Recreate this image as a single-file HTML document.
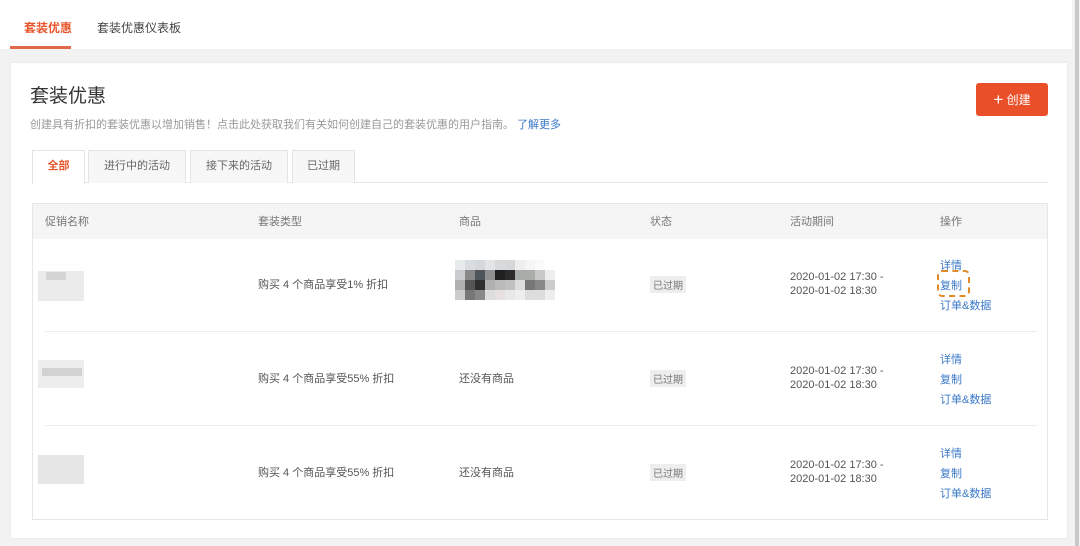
<!DOCTYPE html>
<html><head><meta charset="utf-8"><style>
*{margin:0;padding:0;box-sizing:border-box}
body{width:1080px;height:546px;background:#f2f2f2;font-family:"Liberation Sans","Noto Sans CJK SC",sans-serif;position:relative;overflow:hidden;color:#333}
.a{position:absolute;white-space:nowrap}
.top{position:absolute;left:0;top:0;width:1072px;height:49px;background:#fff}
.card{position:absolute;left:10px;top:62px;width:1058px;height:477px;background:#fff;border:1px solid #ececec}
.tab{position:absolute;top:150px;height:33px;border:1px solid #e4e4e4;border-bottom:none;background:#f7f7f7;font-size:11px;color:#666;text-align:center;line-height:31px}
.tbl{position:absolute;left:32px;top:203px;width:1016px;height:317px;border:1px solid #e6e6e6;background:#fff}
.hd{position:absolute;left:0;top:0;width:100%;height:35px;background:#f5f5f5}
.t{font-size:11px;color:#555}
.h{font-size:11px;color:#777}
.lk{font-size:11px;color:#3a78c8}
.tag{font-size:10px;color:#777;background:#eee;padding:1px 3px}
.ln{position:absolute;left:12px;width:992px;height:1px;background:#ececec}
.mos{position:absolute;left:455px;top:260px;display:grid;grid-template-columns:repeat(10,10px);grid-auto-rows:10px}
</style></head><body>
<div class="top"></div>
<div class="a" style="left:24px;top:19px;font-size:12px;font-weight:bold;color:#e8542a">套装优惠</div>
<div class="a" style="left:97px;top:19px;font-size:12px;color:#444">套装优惠仪表板</div>
<div class="a" style="left:10px;top:46px;width:61px;height:3px;background:#e0694a"></div>
<div class="a" style="left:1075px;top:0;width:4px;height:546px;background:#c8c8c8"></div>
<div class="card"></div>
<div class="a" style="left:30px;top:81px;font-size:19px;color:#333">套装优惠</div>
<div class="a" style="left:30px;top:116px;font-size:11px;color:#999">创建具有折扣的套装优惠以增加销售！点击此处获取我们有关如何创建自己的套装优惠的用户指南。 <span style="color:#3a78c8">了解更多</span></div>
<div class="a" style="left:976px;top:83px;width:72px;height:33px;background:#e9502a;border-radius:3px;color:#fff;font-size:12px;line-height:33px;text-align:center"><span style="font-size:17px;font-weight:300;vertical-align:-1px">+</span> 创建</div>
<div class="a" style="left:32px;top:182px;width:1016px;height:1px;background:#e6e6e6"></div>
<div class="tab" style="left:32px;width:53px;background:#fff;height:34px;color:#e8542a;font-weight:bold">全部</div>
<div class="tab" style="left:88px;width:98px">进行中的活动</div>
<div class="tab" style="left:190px;width:98px">接下来的活动</div>
<div class="tab" style="left:292px;width:63px">已过期</div>
<div class="tbl"><div class="hd"></div>
<div class="ln" style="top:127px"></div><div class="ln" style="top:221px"></div></div>
<div class="a h" style="left:45px;top:213px">促销名称</div>
<div class="a h" style="left:258px;top:213px">套装类型</div>
<div class="a h" style="left:459px;top:213px">商品</div>
<div class="a h" style="left:650px;top:213px">状态</div>
<div class="a h" style="left:790px;top:213px">活动期间</div>
<div class="a h" style="left:940px;top:213px">操作</div>

<div class="a" style="left:38px;top:271px;width:46px;height:30px;background:#ebebeb"></div>
<div class="a" style="left:46px;top:272px;width:20px;height:8px;background:#d4d4d4"></div>
<div class="a" style="left:38px;top:360px;width:46px;height:28px;background:#ededed"></div>
<div class="a" style="left:42px;top:368px;width:40px;height:8px;background:#d2d2d2"></div>
<div class="a" style="left:38px;top:455px;width:46px;height:29px;background:#e6e6e6"></div>

<div class="a t" style="left:258px;top:276px">购买 4 个商品享受1% 折扣</div>
<div class="a t" style="left:258px;top:370px">购买 4 个商品享受55% 折扣</div>
<div class="a t" style="left:258px;top:464px">购买 4 个商品享受55% 折扣</div>
<div class="mos">
<i style="background:#e8ebec"></i><i style="background:#dadde0"></i><i style="background:#d4d8db"></i><i style="background:#e2e4e5"></i><i style="background:#d8d9db"></i><i style="background:#d6d7d9"></i><i style="background:#eee"></i><i style="background:#f5f5f5"></i><i style="background:#fafafa"></i><i style="background:#fff"></i>
<i style="background:#c8cccd"></i><i style="background:#888"></i><i style="background:#4d555a"></i><i style="background:#909090"></i><i style="background:#1f1f1f"></i><i style="background:#2b2b2b"></i><i style="background:#a8aca8"></i><i style="background:#a9ada9"></i><i style="background:#c8c8c8"></i><i style="background:#eee"></i>
<i style="background:#b0b0b0"></i><i style="background:#555"></i><i style="background:#2e2e2e"></i><i style="background:#b0b0b0"></i><i style="background:#bbb"></i><i style="background:#c0c0c0"></i><i style="background:#ddd"></i><i style="background:#777"></i><i style="background:#888"></i><i style="background:#ccc"></i>
<i style="background:#ccc"></i><i style="background:#777"></i><i style="background:#888"></i><i style="background:#ddd"></i><i style="background:#e6e0e0"></i><i style="background:#e8e8e8"></i><i style="background:#eee"></i><i style="background:#ddd"></i><i style="background:#ddd"></i><i style="background:#eee"></i>
</div>
<div class="a t" style="left:459px;top:370px">还没有商品</div>
<div class="a t" style="left:459px;top:464px">还没有商品</div>
<div class="a tag" style="left:650px;top:276px">已过期</div>
<div class="a tag" style="left:650px;top:370px">已过期</div>
<div class="a tag" style="left:650px;top:464px">已过期</div>
<div class="a t" style="left:790px;top:270px;line-height:14px">2020-01-02 17:30 -<br>2020-01-02 18:30</div>
<div class="a t" style="left:790px;top:364px;line-height:14px">2020-01-02 17:30 -<br>2020-01-02 18:30</div>
<div class="a t" style="left:790px;top:458px;line-height:14px">2020-01-02 17:30 -<br>2020-01-02 18:30</div>
<div class="a lk" style="left:940px;top:256px;line-height:20px">详情<br>复制<br>订单&amp;数据</div>
<div class="a" style="left:937px;top:270px;width:33px;height:27px;border:2.5px dashed #e08a2a;border-radius:5px"></div>
<div class="a lk" style="left:940px;top:350px;line-height:20px">详情<br>复制<br>订单&amp;数据</div>
<div class="a lk" style="left:940px;top:444px;line-height:20px">详情<br>复制<br>订单&amp;数据</div>
</body></html>
